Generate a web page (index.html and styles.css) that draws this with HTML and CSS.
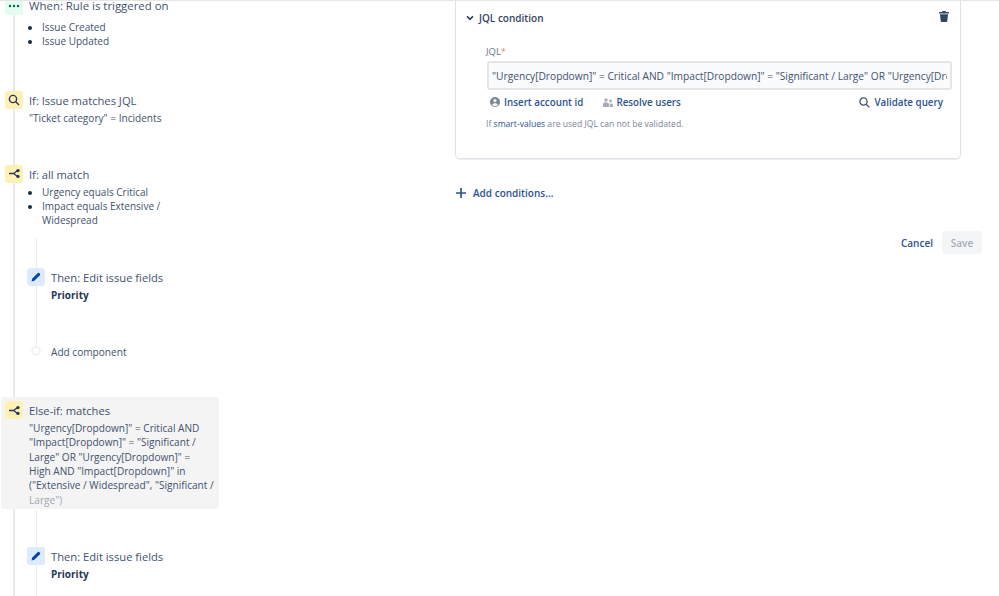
FILE: index.html
```html
<!DOCTYPE html>
<html lang="en">
<head>
<meta charset="utf-8">
<title>Rule editor</title>
<link rel="stylesheet" href="styles.css">
</head>
<body>
<div class="page">
  <div class="rail rail-main"></div>
  <div class="rail rail-a"></div>
  <div class="rail rail-b"></div>
  <section class="rule">
    <div class="step step-when">
      <span class="icon green"><svg width="12" height="4" viewBox="0 0 12 4"><circle cx="2" cy="2" r="1.2"/><circle cx="6" cy="2" r="1.2"/><circle cx="10" cy="2" r="1.2"/></svg></span>
      <div class="body">
        <div class="title">When: Rule is triggered on</div>
        <ul class="list gap"><li>Issue Created</li><li>Issue Updated</li></ul>
      </div>
    </div>
    <div class="step step-if">
      <span class="icon yellow"><svg width="12" height="12" viewBox="0 0 12 12" class="line"><circle cx="5" cy="5" r="3.6"/><path d="M7.8 7.8 11 11"/></svg></span>
      <div class="body">
        <div class="title">If: Issue matches JQL</div>
        <div class="sub">"Ticket category" = Incidents</div>
      </div>
    </div>
    <div class="step step-gap">
      <span class="icon yellow"><svg width="11" height="11" viewBox="0 0 12 12" class="line"><path d="M0 6h5l4-3M5 6l4 3"/><circle cx="9.8" cy="2.8" r="1.8" class="dot"/><circle cx="9.8" cy="9.2" r="1.8" class="dot"/></svg></span>
      <div class="body">
        <div class="title">If: all match</div>
        <ul class="list"><li>Urgency equals Critical</li><li>Impact equals Extensive /<br>Widespread</li></ul>
      </div>
    </div>
    <div class="step nested step-gap">
      <span class="icon blue"><svg width="12" height="12" viewBox="0 0 12 12"><path d="M1.5 10.5 2.3 7.6 7.8 2.1a1 1 0 0 1 1.4 0l.7.7a1 1 0 0 1 0 1.4L4.4 9.7Z"/></svg></span>
      <div class="body">
        <div class="title">Then: Edit issue fields</div>
        <div class="sub strong">Priority</div>
      </div>
    </div>
    <div class="step nested step-gap add">
      <span class="icon"><span class="circle"></span></span>
      <div class="body"><div class="title small">Add component</div></div>
    </div>
    <div class="step selected">
      <span class="icon yellow"><svg width="11" height="11" viewBox="0 0 12 12" class="line"><path d="M0 6h5l4-3M5 6l4 3"/><circle cx="9.8" cy="2.8" r="1.8" class="dot"/><circle cx="9.8" cy="9.2" r="1.8" class="dot"/></svg></span>
      <div class="body">
        <div class="title">Else-if: matches</div>
        <div class="sub">"Urgency[Dropdown]" = Critical AND<br>"Impact[Dropdown]" = "Significant /<br>Large" OR "Urgency[Dropdown]" =<br>High AND "Impact[Dropdown]" in<br>("Extensive / Widespread", "Significant /<br><span class="faded">Large")</span></div>
      </div>
    </div>
    <div class="step nested step-last">
      <span class="icon blue"><svg width="12" height="12" viewBox="0 0 12 12"><path d="M1.5 10.5 2.3 7.6 7.8 2.1a1 1 0 0 1 1.4 0l.7.7a1 1 0 0 1 0 1.4L4.4 9.7Z"/></svg></span>
      <div class="body">
        <div class="title">Then: Edit issue fields</div>
        <div class="sub strong">Priority</div>
      </div>
    </div>
  </section>

  <section class="editor">
    <div class="panel">
      <div class="panel-head">
        <div class="panel-title">
          <svg width="8" height="6" viewBox="0 0 8 6" class="chev"><path d="M1 1.3 4 4.3 7 1.3"/></svg>
          <span>JQL condition</span>
        </div>
        <svg width="10" height="11" viewBox="0 0 10 11" class="trash"><path d="M3.5 0h3l.5 1h3v1.500H0V1h3ZM1 3.300h8L8.300 10a1 1 0 0 1-1 1H2.700a1 1 0 0 1-1-1Z"/></svg>
      </div>
      <div class="field">
        <label class="label">JQL<span class="req">*</span></label>
        <div class="input"><span class="input-text">"Urgency[Dropdown]" = Critical AND "Impact[Dropdown]" = "Significant / Large" OR "Urgency[Dropdown]" = High AND "Impact[Dropdown]" in ("Extensive / Widespread", "Significant / Large")</span></div>
        <div class="tools">
          <a class="tool"><svg width="10" height="10" viewBox="0 0 10 10" class="grey"><path fill-rule="evenodd" d="M5 0a5 5 0 1 1 0 10A5 5 0 0 1 5 0Zm0 1.900a1.600 1.600 0 1 0 0 3.200A1.600 1.600 0 0 0 5 1.900ZM2 7.800a4 4 0 0 0 6 0C7.500 6.700 6.300 6.200 5 6.200s-2.500.5-3 1.600Z"/></svg>Insert account id</a>
          <a class="tool tool-users"><svg width="10" height="9" viewBox="0 0 10 9" class="pale"><circle cx="3" cy="2" r="1.700"/><circle cx="7.500" cy="3" r="1.400"/><path d="M0 9V6.300C0 5 1.300 4.300 3 4.300S6 5 6 6.300V9ZM6.800 9V5.500c1.700-.3 3.200.3 3.200 1.500v2Z"/></svg>Resolve users</a>
          <a class="tool tool-validate"><svg width="11" height="11" viewBox="0 0 11 11" class="search"><circle cx="4.500" cy="4.500" r="3.600"/><path d="M7.200 7.200 10.400 10.400"/></svg>Validate query</a>
        </div>
        <p class="help">If <a>smart-values</a> are used JQL can not be validated.</p>
      </div>
    </div>
    <a class="add-cond"><svg width="10" height="10" viewBox="0 0 10 10" class="plus"><path d="M5 0v10M0 5h10"/></svg>Add conditions...</a>
    <div class="actions">
      <a class="cancel">Cancel</a>
      <button class="save" type="button">Save</button>
    </div>
  </section>
</div>
</body>
</html>
```
FILE: styles.css
```css
* { box-sizing: border-box; }
html, body { margin: 0; padding: 0; height: 100%; overflow: hidden; background: #fff; }
body { font-family: "Open Sans", "Noto Sans", sans-serif; font-size: 10px; color: #42526e; }
a { color: #2c5390; }

.page { position: relative; display: flex; align-items: flex-start; width: 999px; height: 596px; overflow: hidden; border-top: 1px solid #e6e6e6; }

.rail { position: absolute; width: 1px; background: #e4e4e4; }
.rail-main { left: 13px; top: 0; bottom: 0; width: 2px; background: #e9e9e9; }
.rail-a { left: 36px; top: 237px; height: 108px; background: #ececec; }
.rail-b { left: 36px; top: 509px; bottom: 0; background: #ececec; }

.rule { position: relative; width: 219px; flex: none; margin-top: -5px; }
.step { display: flex; gap: 6px; padding-left: 5px; }
.step.nested { padding-left: 27px; }
.step-if { margin-top: 42px; }
.step-gap { margin-top: 40px; }
.step-last { margin-top: 38px; }
.selected { margin: 36px 0 0 1px; padding: 4px 6px 2px 4px; background: #f4f4f4; border-radius: 3px; }

.icon { flex: none; display: flex; align-items: center; justify-content: center; width: 18px; height: 18px; border-radius: 3px; }
.step-when .icon { height: 19px; }
.green { background: #e3fcef; fill: #006644; }
.yellow { background: #fff0b3; }
.blue { background: #deebff; fill: #0747a6; }
.line { fill: none; stroke: #253858; stroke-width: 1.4; }
.line .dot { fill: #253858; stroke: none; }
.circle { width: 10px; height: 10px; border: 2px solid #f1f2f4; border-radius: 50%; background: #fff; }

.body { min-width: 0; margin-top: 1px; white-space: nowrap; }
.step-when .body { margin-top: 4px; }
.title { font-size: 11.2px; line-height: 18px; color: #42526e; }
.step-when .title { font-size: 11.4px; line-height: 12px; }
.title.small { font-size: 10.1px; }
.sub { margin-top: 1px; font-size: 10.1px; line-height: 14.3px; }
.strong { font-size: 10px; font-weight: 700; color: #253858; }
.faded { color: #a0a8b5; }

.list { margin: 1px 0 0; padding: 0 0 0 13px; font-size: 10px; line-height: 14.3px; color: #42526e; }
.list.gap { margin-top: 8px; }
.list li::marker { color: #172b4d; font-size: 10px; }

.editor { width: 527px; flex: none; margin-left: 236px; }
.panel { width: 506px; height: 159px; margin-top: -1px; padding: 0 8px 0 10px; border: 1px solid #dfe1e6; border-top: 0; border-radius: 0 0 5px 5px; box-shadow: 0 1px 1px #eceef1; }
.panel-head { display: flex; align-items: center; justify-content: space-between; height: 36px; padding-right: 3px; }
.panel-title { display: flex; align-items: center; gap: 5px; font-size: 10px; font-weight: 600; color: #344563; }
.chev { fill: none; stroke: #253858; stroke-width: 1.6; }
.trash { fill: #344563; margin-top: -4px; }

.field { padding-left: 20px; margin-top: 8px; }
.label { display: block; height: 17px; font-size: 9.5px; line-height: 16px; color: #6b778c; }
.req { color: #e8836c; font-size: 8.5px; }
.input { width: 465px; height: 29px; margin-left: 1px; padding: 0 3px; display: flex; align-items: center; background: #fafbfc; border: 2px solid #e4e6ea; border-radius: 3px; overflow: hidden; }
.input-text { white-space: nowrap; overflow: hidden; font-size: 10.2px; color: #42526e; }

.tools { display: flex; align-items: center; height: 24px; padding-left: 4px; width: 457px; }
.tool { display: flex; align-items: center; gap: 4px; font-size: 9.8px; font-weight: 600; color: #2c5390; }
.tool-users { margin-left: 20px; gap: 3px; }
.tool-validate { margin-left: auto; }
.grey { fill: #7a8699; }
.pale { fill: #a5adba; }
.search { fill: none; stroke: #42526e; stroke-width: 1.3; }
.help { margin: 3px 0 0; font-size: 8.6px; line-height: 14px; color: #7a869a; }

.add-cond { display: flex; align-items: center; gap: 7px; margin-top: 27px; padding-left: 1px; font-size: 10px; font-weight: 600; line-height: 14px; color: #2c5390; }
.plus { fill: none; stroke: #2c5390; stroke-width: 1.7; }

.actions { display: flex; align-items: center; justify-content: flex-end; gap: 9px; margin-top: 31px; }
.cancel { font-size: 10px; font-weight: 600; color: #2c5390; }
.save { width: 40px; height: 23px; padding: 0; border: 0; border-radius: 3px; background: #f4f5f7; font: 600 10px "Open Sans", sans-serif; color: #a5adba; }
```
